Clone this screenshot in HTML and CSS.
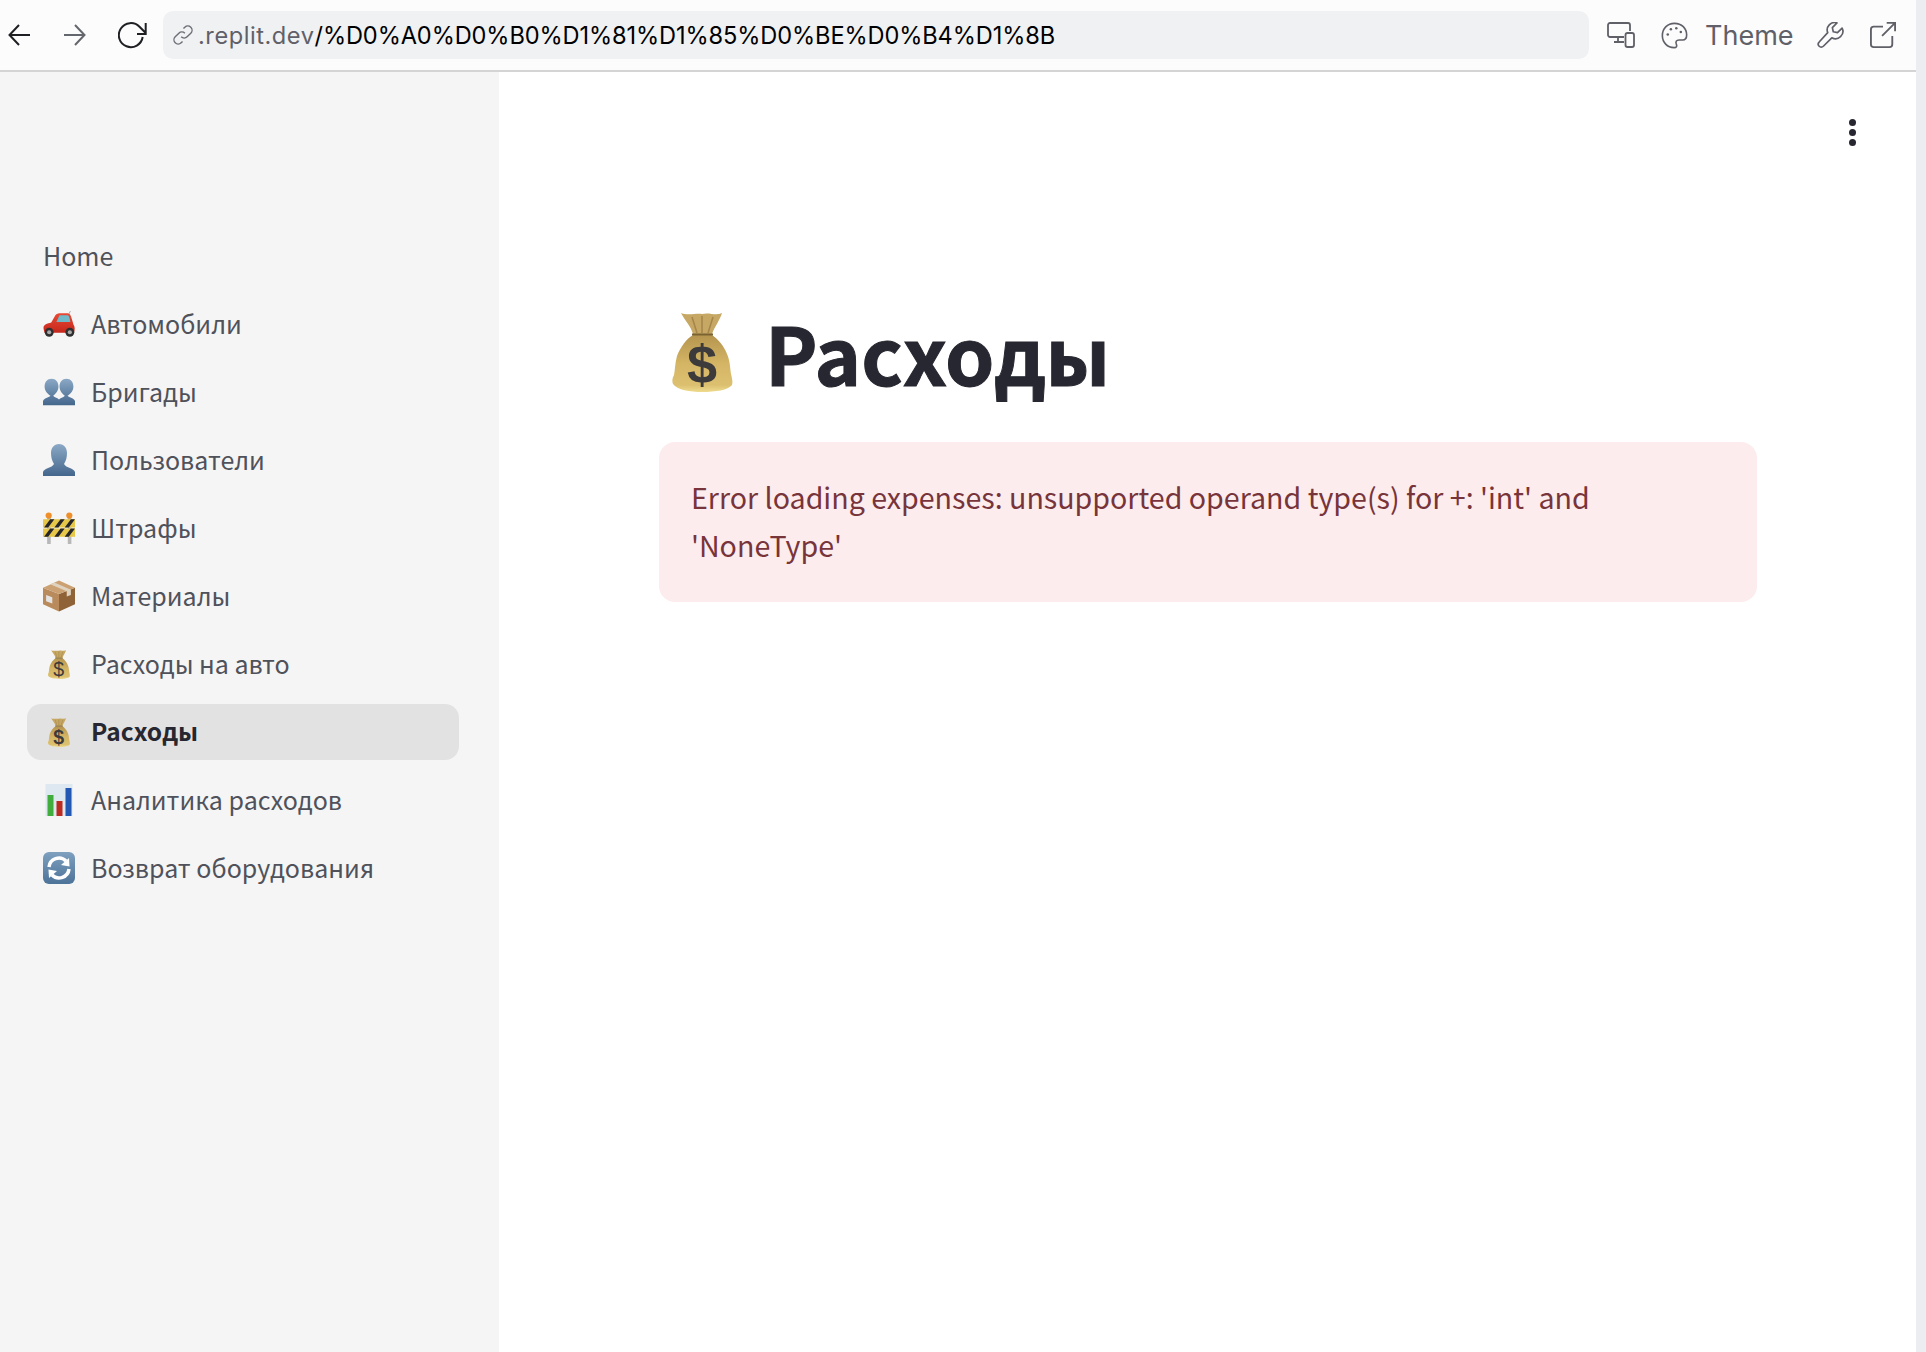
FILE: index.html
```html
<!DOCTYPE html>
<html lang="en">
<head>
  <meta charset="UTF-8">
  <title>Расходы</title>
  <link rel="stylesheet" href="styles.css">
</head>
<body>
  <svg class="sprites" width="0" height="0">
    <defs>
      <linearGradient id="goldBag" x1="0" y1="0" x2="0" y2="1">
        <stop offset="0" stop-color="#b5954e"/>
        <stop offset="0.5" stop-color="#d4b565"/>
        <stop offset="0.88" stop-color="#dcc070"/>
        <stop offset="1" stop-color="#eedb8e"/>
      </linearGradient>
      <linearGradient id="bluePerson" x1="0" y1="0" x2="0" y2="1">
        <stop offset="0" stop-color="#8ba9c6"/>
        <stop offset="1" stop-color="#44668c"/>
      </linearGradient>
      <linearGradient id="syncBlue" x1="0" y1="0" x2="0" y2="1">
        <stop offset="0" stop-color="#7fa0bf"/>
        <stop offset="1" stop-color="#4c7398"/>
      </linearGradient>
      <linearGradient id="carRed" x1="0" y1="0" x2="0" y2="1">
        <stop offset="0" stop-color="#ea4a34"/>
        <stop offset="1" stop-color="#c4271c"/>
      </linearGradient>
      <symbol id="bag" viewBox="0 0 61 80">
        <path d="M9 1 C16 4 24 1 30 2 C37 0 44 4 50 1 C48 8 43 14 40 22 L21 22 C19 14 13 9 9 1Z" fill="#c6a763"/>
        <path d="M20 5 L25 21 M30 4 L30 21 M41 5 L36 21" stroke="#a5854a" stroke-width="1.500" fill="none"/>
        <path d="M21 23 C14 27 8 36 5 44 C3 51 3 58 2 63 C0 66 0 70 1 72 C5 78 18 80 30 80 C44 80 56 78 60 73 C61 70 60 66 59 62 C58 55 58 49 55 42 C52 34 46 27 40 23 Z" fill="url(#goldBag)"/>
        <path d="M20 22.500 H41" stroke="#7a6233" stroke-width="2"/>
        <text x="30" y="71" class="bag-dollar" text-anchor="middle">$</text>
      </symbol>
      <symbol id="people" viewBox="0 0 30 25">
        <path d="M0 25 V21 C1 18 5 18 7 16 C4 14 1.500 11 1.500 7.500 C1.500 3 4 0 8 0 C12 0 14.500 3 14.500 7.500 C14.500 11 12 14 9.500 16 C11 18 14 18 15 19.500 C16 18 19 18 20.500 16 C18 14 15.500 11 15.500 7.500 C15.500 3 18 0 22 0 C26 0 28.500 3 28.500 7.500 C28.500 11 26 14 23 16 C25 18 29 18 30 21 V25Z" fill="url(#bluePerson)"/>
      </symbol>
      <symbol id="person" viewBox="0 0 32 32">
        <path d="M0 32 V28 C1 24 9 24 11 20 C9 17 8 13 8 9 C8 3 12 0 16 0 C20 0 24 3 24 9 C24 13 23 17 21 20 C23 24 31 24 32 28 V32Z" fill="url(#bluePerson)"/>
      </symbol>
    </defs>
  </svg>

  <div class="window">
    <header class="toolbar">
      <svg class="back" width="22" height="22" viewBox="0 0 22 22"><path d="M22 11H1.500M11 1L1.500 11 11 21" fill="none" stroke="#1f2024" stroke-width="2"/></svg>
      <svg class="forward" width="22" height="22" viewBox="0 0 22 22"><path d="M0 11h20.500M11 1l9.500 10L11 21" fill="none" stroke="#65676e" stroke-width="2"/></svg>
      <svg class="reload" width="30" height="27" viewBox="0 0 30 27"><path d="M24.700 15A12 12 0 1 1 21.500 4.800L27.700 11M27.700 1v11H19" fill="none" stroke="#1f2024" stroke-width="2"/></svg>
      <div class="url-bar">
        <svg class="link-icon" width="22" height="22" viewBox="0 0 24 24"><path d="M10 14a4.500 4.500 0 0 0 6.500 0l4-4a4.500 4.500 0 0 0-6.500-6.500l-1.500 1.500M14 10a4.500 4.500 0 0 0-6.500 0l-4 4a4.500 4.500 0 0 0 6.500 6.500l1.500-1.500" fill="none" stroke="#6b6d74" stroke-width="1.500"/></svg>
        <span class="url-host">.replit.dev</span><span class="url-path">/%D0%A0%D0%B0%D1%81%D1%85%D0%BE%D0%B4%D1%8B</span>
      </div>
      <div class="tools">
        <svg width="28" height="26" viewBox="0 0 28 26"><path d="M17 15H3a2 2 0 0 1-2-2V3a2 2 0 0 1 2-2h18a2 2 0 0 1 2 2v6M11 15v5M7 20h10" fill="none" stroke="#5f6068" stroke-width="1.800"/><rect x="18.500" y="11" width="8.500" height="14" rx="2" fill="none" stroke="#5f6068" stroke-width="1.800"/></svg>
        <svg width="27" height="27" viewBox="0 0 30 30"><path d="M15 1.500C7 1.500 1.500 7.500 1.500 15S7 28.500 14.500 28.500c3 0 3.500-2 2.500-4-1-2.500 0-4.500 3-4.500h4c3 0 4.500-2 4.500-5.500C28.500 7 23 1.500 15 1.500Z" fill="none" stroke="#5f6068" stroke-width="1.800"/><circle cx="7.500" cy="14" r="1.400" fill="#5f6068"/><circle cx="11" cy="8" r="1.400" fill="#5f6068"/><circle cx="17" cy="7" r="1.400" fill="#5f6068"/><circle cx="22" cy="11" r="1.400" fill="#5f6068"/></svg>
        <span class="theme-label">Theme</span>
        <svg width="27" height="26" viewBox="0 0 28 28"><path d="M26.500 6.500l-5 5-4.500-1-1-4.500 5-5a8 8 0 0 0-10 10.500L1.800 21.600a3 3 0 0 0 4.500 4.500l9.100-9.100a8 8 0 0 0 11.100-10.500Z" fill="none" stroke="#5f6068" stroke-width="1.800" stroke-linejoin="round"/></svg>
        <svg width="26" height="26" viewBox="0 0 28 28"><path d="M14 5H4a3 3 0 0 0-3 3v16a3 3 0 0 0 3 3h17a3 3 0 0 0 3-3V15M13 15L27 1M18 1h9v9" fill="none" stroke="#5f6068" stroke-width="2"/></svg>
      </div>
    </header>

    <div class="app">
      <aside class="sidebar">
        <a class="nav-home"><span>Home</span></a>
        <nav class="nav-list">
          <a class="nav-item">
            <svg class="emoji" viewBox="0 0 31 25"><path d="M25 3l1.500-3" stroke="#999" stroke-width="0.800"/><path d="M0.500 16C0.500 13 4 12 8 11L12 4C13 2.500 15 2 17 2H24C26 2 27 4 28 8L29.500 13C31 15 31 18 30 21H1.500C1 19 0.500 18 0.500 16Z" fill="url(#carRed)"/><path d="M13 10.500L16 4H24C25 4 26 7 26.500 10.500Z" fill="#6fb9c9"/><circle cx="6" cy="20.500" r="4.300" fill="#2f2f2f"/><circle cx="6" cy="20.500" r="2" fill="#a9a9a9"/><circle cx="26" cy="20.500" r="4.300" fill="#2f2f2f"/><circle cx="26" cy="20.500" r="2" fill="#a9a9a9"/></svg>
            <span>Автомобили</span>
          </a>
          <a class="nav-item"><svg class="emoji"><use href="#people"/></svg><span>Бригады</span></a>
          <a class="nav-item"><svg class="emoji"><use href="#person"/></svg><span>Пользователи</span></a>
          <a class="nav-item">
            <svg class="emoji" viewBox="0 0 31 31"><rect x="4" y="5" width="3.500" height="26" fill="#b8b8b8"/><rect x="24" y="5" width="3.500" height="26" fill="#b8b8b8"/><circle cx="5.500" cy="3.500" r="3" fill="#ef8f2a"/><circle cx="25.500" cy="3.500" r="3" fill="#ef8f2a"/><rect y="7" width="31" height="8" fill="#e6c748"/><rect y="16" width="31" height="8" fill="#e6c748"/><path d="M1 15l6-8h4l-6 8ZM11 15l6-8h4l-6 8ZM21 15l6-8h4l-6 8ZM1 24l6-8h4l-6 8ZM11 24l6-8h4l-6 8ZM21 24l6-8h4l-6 8Z" fill="#26262a"/></svg>
            <span>Штрафы</span>
          </a>
          <a class="nav-item">
            <svg class="emoji" viewBox="0 0 31 30"><path d="M15.500 13L31 7V23L15.500 30Z" fill="#8f6337"/><path d="M15.500 13L0 7V23L15.500 30Z" fill="#b98a5c"/><path d="M0 7L15.500 0L31 7L15.500 13Z" fill="#cba173"/><path d="M7 3.500L11 2L27 9L27 14L23 15.500L23 10.500Z" fill="#dfd3bf"/><rect x="3" y="13" width="6" height="6" fill="#e3e3e3" transform="skewY(20)"/></svg>
            <span>Материалы</span>
          </a>
          <a class="nav-item"><svg class="emoji bag-small"><use href="#bag"/></svg><span>Расходы на авто</span></a>
          <a class="nav-item active"><svg class="emoji bag-small"><use href="#bag"/></svg><span>Расходы</span></a>
          <a class="nav-item">
            <svg class="emoji" viewBox="0 0 27 32"><rect width="27" height="32" fill="#dde8f1"/><rect x="2" y="11" width="6" height="21" fill="#41ad3d"/><rect x="11" y="17" width="6" height="15" fill="#bb2b20"/><rect x="20" y="4" width="6" height="28" fill="#2257b3"/></svg>
            <span>Аналитика расходов</span>
          </a>
          <a class="nav-item">
            <svg class="emoji" viewBox="0 0 32 32"><rect width="32" height="32" rx="6" fill="url(#syncBlue)"/><path d="M6 15A10 10 0 0 1 23 9" fill="none" stroke="#fff" stroke-width="3.500"/><path d="M26 6L26.500 14.500L18 13Z" fill="#fff"/><path d="M26 17A10 10 0 0 1 9 23" fill="none" stroke="#fff" stroke-width="3.500"/><path d="M6 26L5.500 17.500L14 19Z" fill="#fff"/></svg>
            <span>Возврат оборудования</span>
          </a>
        </nav>
      </aside>

      <main class="content">
        <div class="kebab"><i></i><i></i><i></i></div>
        <div class="block">
          <h1 class="page-title"><svg class="title-emoji"><use href="#bag"/></svg>Расходы</h1>
          <div class="alert">Error loading expenses: unsupported operand type(s) for +: 'int' and 'NoneType'</div>
        </div>
      </main>
    </div>
  </div>
  <div class="scrollbar"></div>
</body>
</html>
```

FILE: styles.css
```css
html, body {
  margin: 0;
  height: 100%;
  overflow: hidden;
}

body {
  display: flex;
  font-family: "Noto Sans CJK SC", "Noto Sans", sans-serif;
  background-color: #fff;
  color: #262730;
}

.sprites {
  position: absolute;
}

.bag-dollar {
  font-family: "Liberation Sans", sans-serif;
  font-size: 54px;
  fill: #3d3a3c;
}

.window {
  display: flex;
  flex-direction: column;
  flex: 1;
  min-width: 0;
}

.scrollbar {
  width: 10px;
  flex-shrink: 0;
  background-color: #ecedf0;
}

/* browser bar */
.toolbar {
  display: flex;
  align-items: center;
  height: 70px;
  flex-shrink: 0;
  background-color: #fcfcfc;
  border-bottom: 2px solid #d4d4d4;
}

.back {
  margin-left: 8px;
}

.forward {
  margin-left: 34px;
}

.reload {
  margin-left: 32px;
}

.url-bar {
  display: flex;
  align-items: center;
  width: 1426px;
  height: 48px;
  margin-left: 15px;
  padding-left: 9px;
  box-sizing: border-box;
  background-color: #f0f1f3;
  border-radius: 10px;
  font-family: Inter, sans-serif;
  font-size: 23.6px;
}

.link-icon {
  margin-right: 4px;
}

.url-host {
  color: #5f6068;
  letter-spacing: 0.55px;
}

.url-path {
  color: #000;
  letter-spacing: -0.11px;
}

.tools {
  display: flex;
  align-items: center;
  gap: 26px;
  margin-left: 18px;
}

.theme-label {
  margin: 0 -3px 0 -9px;
  font-family: Inter, sans-serif;
  font-size: 27px;
  color: #5f6068;
}

/* app */
.app {
  display: flex;
  flex: 1;
  min-height: 0;
}

.sidebar {
  width: 499px;
  flex-shrink: 0;
  padding: 156px 40px 0 27px;
  box-sizing: border-box;
  background-color: #f5f5f5;
  font-size: 25px;
  color: #50525b;
}

.nav-home {
  display: flex;
  align-items: center;
  height: 56px;
  padding-left: 16px;
  margin-bottom: 12px;
}

.nav-list {
  display: flex;
  flex-direction: column;
  gap: 12px;
}

.nav-item {
  display: flex;
  align-items: center;
  gap: 16px;
  height: 56px;
  padding-left: 16px;
  border-radius: 14px;
}

.nav-home span,
.nav-item span {
  padding-bottom: 3px;
}

.nav-item.active {
  background-color: #e2e2e2;
  color: #262730;
  font-size: 24.5px;
  font-weight: 700;
}

.emoji {
  width: 32px;
  height: 32px;
  flex-shrink: 0;
}

.bag-small {
  height: 29px;
}

.content {
  position: relative;
  flex: 1;
  padding-top: 232px;
  padding-left: 160px;
}

.kebab {
  position: absolute;
  top: 47px;
  right: 60px;
  display: flex;
  flex-direction: column;
  gap: 3px;
}

.kebab i {
  width: 7px;
  height: 7px;
  border-radius: 50%;
  background-color: #262730;
}

.block {
  width: 1098px;
}

.page-title {
  display: flex;
  align-items: center;
  gap: 32px;
  margin: 0 0 43px 13px;
  font-size: 79px;
  line-height: 95px;
  font-weight: 700;
  -webkit-text-stroke: 1px #262730;
}

.title-emoji {
  width: 61px;
  height: 80px;
}

.alert {
  padding: 31px 32px 33px;
  border-radius: 16px;
  background-color: #fdeced;
  color: #77343a;
  font-size: 28.6px;
  line-height: 48px;
}
```
